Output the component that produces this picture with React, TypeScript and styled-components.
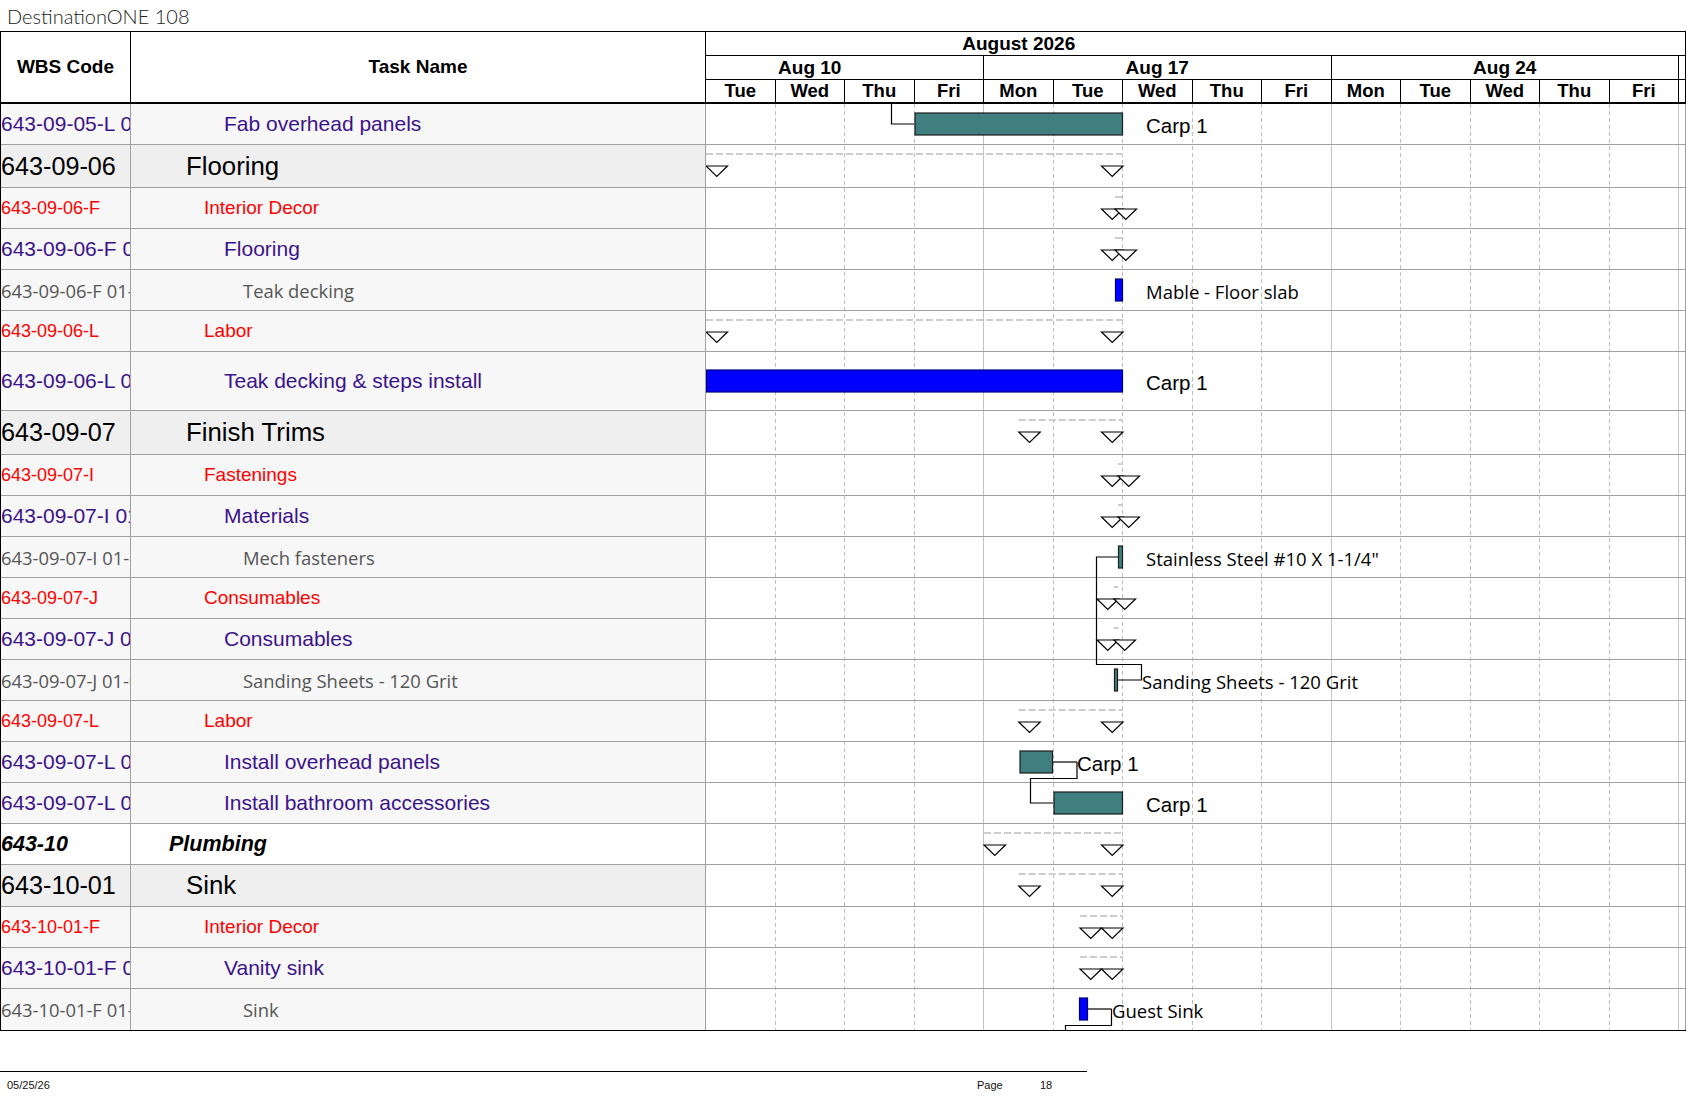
import React from 'react';
import styled, { createGlobalStyle, css } from 'styled-components';

const GlobalStyle = createGlobalStyle`
  html, body {
    margin: 0;
    padding: 0;
    background: #fff;
  }
  body {
    font-family: "Liberation Sans", Arial, sans-serif;
    color: #000;
  }
  * {
    box-sizing: border-box;
  }
`;

const DAY = 69.5;
const WBS_W = 130;
const TASK_W = 575;
const GANTT_W = 979;

type Kind = 'big' | 'red' | 'purple' | 'gray' | 'plumb';

interface TaskRow {
  wbs: string;
  name: string;
  kind: Kind;
  h: number;
}

const rows: TaskRow[] = [
  { wbs: '643-09-05-L 01', name: 'Fab overhead panels', kind: 'purple', h: 41 },
  { wbs: '643-09-06', name: 'Flooring', kind: 'big', h: 43 },
  { wbs: '643-09-06-F', name: 'Interior Decor', kind: 'red', h: 41 },
  { wbs: '643-09-06-F 01', name: 'Flooring', kind: 'purple', h: 41 },
  { wbs: '643-09-06-F 01-01', name: 'Teak decking', kind: 'gray', h: 41 },
  { wbs: '643-09-06-L', name: 'Labor', kind: 'red', h: 41 },
  { wbs: '643-09-06-L 01', name: 'Teak decking & steps install', kind: 'purple', h: 59 },
  { wbs: '643-09-07', name: 'Finish Trims', kind: 'big', h: 44 },
  { wbs: '643-09-07-I', name: 'Fastenings', kind: 'red', h: 41 },
  { wbs: '643-09-07-I 01', name: 'Materials', kind: 'purple', h: 41 },
  { wbs: '643-09-07-I 01-01', name: 'Mech fasteners', kind: 'gray', h: 41 },
  { wbs: '643-09-07-J', name: 'Consumables', kind: 'red', h: 41 },
  { wbs: '643-09-07-J 01', name: 'Consumables', kind: 'purple', h: 41 },
  { wbs: '643-09-07-J 01-01', name: 'Sanding Sheets - 120 Grit', kind: 'gray', h: 41 },
  { wbs: '643-09-07-L', name: 'Labor', kind: 'red', h: 41 },
  { wbs: '643-09-07-L 01', name: 'Install overhead panels', kind: 'purple', h: 41 },
  { wbs: '643-09-07-L 02', name: 'Install bathroom accessories', kind: 'purple', h: 41 },
  { wbs: '643-10', name: 'Plumbing', kind: 'plumb', h: 41 },
  { wbs: '643-10-01', name: 'Sink', kind: 'big', h: 42 },
  { wbs: '643-10-01-F', name: 'Interior Decor', kind: 'red', h: 41 },
  { wbs: '643-10-01-F 01', name: 'Vanity sink', kind: 'purple', h: 41 },
  { wbs: '643-10-01-F 01-01', name: 'Sink', kind: 'gray', h: 41 },
];

const tops: number[] = [];
rows.reduce((y, r) => {
  tops.push(y);
  return y + r.h;
}, 0);
const BODY_H = rows.reduce((s, r) => s + r.h, 0);
const center = (i: number) => tops[i] + (rows[i].h - 1) / 2;

// summary spans (start/end, px from the gantt's left edge)
const summaries = [
  { row: 1, x0: 0, x1: 417 },
  { row: 2, x0: 409, x1: 417 },
  { row: 3, x0: 409, x1: 417 },
  { row: 5, x0: 0, x1: 417 },
  { row: 7, x0: 312.75, x1: 417 },
  { row: 8, x0: 412, x1: 417 },
  { row: 9, x0: 412, x1: 417 },
  { row: 11, x0: 408, x1: 412.5 },
  { row: 12, x0: 408, x1: 412.5 },
  { row: 14, x0: 312.75, x1: 417 },
  { row: 17, x0: 278, x1: 417 },
  { row: 18, x0: 312.75, x1: 417 },
  { row: 19, x0: 374, x1: 417 },
  { row: 20, x0: 374, x1: 417 },
];

const TEAL = '#407f7f';
const BLUE = '#0000ff';

const bars = [
  { row: 0, x0: 208.5, x1: 417, fill: TEAL },
  { row: 4, x0: 409, x1: 417, fill: BLUE },
  { row: 6, x0: 0, x1: 417, fill: BLUE },
  { row: 10, x0: 412, x1: 417, fill: TEAL },
  { row: 13, x0: 408, x1: 412, fill: TEAL },
  { row: 15, x0: 313.5, x1: 347, fill: TEAL },
  { row: 16, x0: 347.5, x1: 417, fill: TEAL },
  { row: 21, x0: 373, x1: 382, fill: BLUE },
];

type Face = 'arial' | 'calibri';

const labels: { row: number; x: number; text: string; face: Face }[] = [
  { row: 0, x: 440, text: 'Carp 1', face: 'arial' },
  { row: 4, x: 440, text: 'Mable - Floor slab', face: 'calibri' },
  { row: 6, x: 440, text: 'Carp 1', face: 'arial' },
  { row: 10, x: 440, text: 'Stainless Steel #10 X 1-1/4"', face: 'calibri' },
  { row: 13, x: 436, text: 'Sanding Sheets - 120 Grit', face: 'calibri' },
  { row: 15, x: 371, text: 'Carp 1', face: 'arial' },
  { row: 16, x: 440, text: 'Carp 1', face: 'arial' },
  { row: 21, x: 406, text: 'Guest Sink', face: 'calibri' },
];

const links = [
  '185.5,0 185.5,20 208.5,20',
  '412,453 390.5,453 390.5,560.5 435.5,560.5 435.5,576 412,576',
  '347,658 371,658',
  '371,658 371,674.5 324.5,674.5 324.5,699 347.5,699',
  '382,905 405.5,905',
  '405.5,905 405.5,921.5 359.5,921.5 359.5,926',
];

const weeks = [
  { label: 'Aug 10', days: 4, shift: DAY },
  { label: 'Aug 17', days: 5, shift: 0 },
  { label: 'Aug 24', days: 5, shift: 0 },
];
const dayNames = ['Tue', 'Wed', 'Thu', 'Fri', 'Mon', 'Tue', 'Wed', 'Thu', 'Fri', 'Mon', 'Tue', 'Wed', 'Thu', 'Fri'];

const kindText: Record<Kind, ReturnType<typeof css>> = {
  big: css`
    font-size: 25.8px;
    color: #000;
  `,
  red: css`
    font-size: 19px;
    color: #ff0000;
  `,
  purple: css`
    font-size: 21px;
    color: #3b138a;
  `,
  gray: css`
    font-family: "Open Sans", "Liberation Sans", sans-serif;
    font-size: 18.4px;
    color: #555;
  `,
  plumb: css`
    font-size: 21.5px;
    font-weight: bold;
    font-style: italic;
    color: #000;
  `,
};

// the code column prints a touch smaller for some levels
const wbsSize: Partial<Record<Kind, number>> = { big: 25.2, red: 18 };

const indent: Record<Kind, number> = { plumb: 38, big: 55, red: 73, purple: 93, gray: 112 };
const rowBg: Record<Kind, string> = { plumb: '#ffffff', big: '#efefef', red: '#f7f7f7', purple: '#f7f7f7', gray: '#f7f7f7' };

const Page = styled.div`
  width: 1687px;
  min-height: 1097px;
  background: #fff;
`;

const TitleBar = styled.div`
  height: 31px;
  padding-left: 7px;
  display: flex;
  align-items: center;
  font-family: Lato, "Open Sans", sans-serif;
  font-weight: 300;
  font-size: 20px;
  color: #222;
`;

const Sheet = styled.div`
  width: 1686px;
  border: 1px solid #000;
  border-right: none;
`;

const HeadRow = styled.div`
  display: grid;
  grid-template-columns: ${WBS_W}px ${TASK_W}px ${GANTT_W + 1}px;
  height: 72px;
  border-bottom: 2px solid #000;
  background: #fff;
`;

const HeadCell = styled.div`
  display: flex;
  align-items: center;
  justify-content: center;
  border-right: 1px solid #000;
  font-weight: bold;
  font-size: 19px;
`;

const TimeScale = styled.div`
  display: flex;
  flex-direction: column;
  border-right: 1px solid #000;
  font-weight: bold;
`;

const MonthBand = styled.div`
  height: 24px;
  border-bottom: 1px solid #000;
  display: flex;
  align-items: center;
  justify-content: center;
  padding-right: ${GANTT_W - 2 * 312.75}px;
  font-size: 19px;
`;

const Band = styled.div<{ $h: number; $line?: boolean }>`
  display: flex;
  height: ${(p) => p.$h}px;
  border-bottom: ${(p) => (p.$line ? '1px solid #000' : 'none')};
`;

const ScaleCell = styled.div<{ $w: number; $shift?: number; $size: number }>`
  flex: 0 0 ${(p) => p.$w}px;
  display: flex;
  align-items: center;
  justify-content: center;
  padding-right: ${(p) => p.$shift || 0}px;
  border-right: 1px solid #000;
  font-size: ${(p) => p.$size}px;
`;

const Body = styled.div`
  display: flex;
`;

const Tree = styled.div`
  flex: none;
  width: ${WBS_W + TASK_W}px;
`;

const TreeRow = styled.div<{ $h: number; $kind: Kind }>`
  display: grid;
  grid-template-columns: ${WBS_W}px ${TASK_W}px;
  height: ${(p) => p.$h}px;
  border-bottom: 1px solid #a0a0a0;
  background: ${(p) => rowBg[p.$kind]};
  &:last-child {
    border-bottom: none;
  }
`;

const Cell = styled.div<{ $kind: Kind }>`
  display: flex;
  align-items: center;
  overflow: hidden;
  white-space: nowrap;
  border-right: 1px solid #a0a0a0;
  ${(p) => kindText[p.$kind]}
`;

const WbsCell = styled(Cell)<{ $size?: number }>`
  padding-left: 0;
  ${(p) => (p.$size ? `font-size: ${p.$size}px;` : '')}
`;

const NameCell = styled(Cell)<{ $indent: number }>`
  padding-left: ${(p) => p.$indent}px;
`;

const Chart = styled.svg`
  display: block;
  flex: none;
  background: #fff;
`;

const BarLabel = styled.text<{ $face: Face }>`
  font-family: ${(p) => (p.$face === 'arial' ? '"Liberation Sans", Arial, sans-serif' : '"Open Sans", sans-serif')};
  font-size: ${(p) => (p.$face === 'arial' ? 20.5 : 18.5)}px;
  fill: #000;
  dominant-baseline: central;
`;

const Footer = styled.div`
  width: 1087px;
  margin-top: 40px;
  border-top: 1px solid #000;
  display: flex;
  padding: 7px 0 0 7px;
  font-size: 11px;
  line-height: 13px;
  color: #111;
`;

const FooterDate = styled.div`
  flex: 1;
`;

const FooterSlot = styled.div<{ $w: number }>`
  width: ${(p) => p.$w}px;
`;

const Triangle: React.FC<{ x: number; y: number }> = ({ x, y }) => (
  <polygon
    points={`${x},${y} ${x + 21.5},${y} ${x + 10.75},${y + 10.5}`}
    fill="#fff"
    stroke="#000"
    strokeWidth={1.2}
  />
);

const GanttBody: React.FC = () => (
  <Chart width={GANTT_W + 1} height={BODY_H} viewBox={`0 0 ${GANTT_W + 1} ${BODY_H}`}>
    {Array.from({ length: 14 }, (_, i) => {
      const d = i + 1;
      const x = Math.round(d * DAY) - 0.5;
      const week = d === 4 || d === 9 || d === 14;
      return (
        <line
          key={d}
          x1={x}
          x2={x}
          y1={0}
          y2={BODY_H}
          stroke={week ? '#c4c4c4' : '#bdbdbd'}
          strokeWidth={1}
          strokeDasharray={week ? undefined : '4 3'}
        />
      );
    })}
    <line x1={GANTT_W + 0.5} x2={GANTT_W + 0.5} y1={0} y2={BODY_H} stroke="#a0a0a0" />
    {rows.slice(0, -1).map((r, i) => (
      <line key={i} x1={0} x2={GANTT_W} y1={tops[i] + r.h - 0.5} y2={tops[i] + r.h - 0.5} stroke="#a0a0a0" />
    ))}

    {summaries.map((s) => {
      const t = tops[s.row];
      return (
        <g key={s.row}>
          <line x1={s.x0} x2={s.x1} y1={t + 9} y2={t + 9} stroke="#cdcdcd" strokeWidth={2} strokeDasharray="7 3" />
          <Triangle x={s.x1 - 21.5} y={t + 21} />
          <Triangle x={s.x0} y={t + 21} />
        </g>
      );
    })}

    {links.map((pts, i) => (
      <polyline key={i} points={pts} fill="none" stroke="#000" strokeWidth={1.2} />
    ))}

    {bars.map((b) => {
      const y = center(b.row) - 11;
      return (
        <rect
          key={b.row}
          x={b.x0 + 0.5}
          y={y}
          width={b.x1 - b.x0 - 1}
          height={22}
          fill={b.fill}
          stroke={b.fill === BLUE ? '#00007a' : '#1c1c1c'}
          strokeWidth={1.2}
        />
      );
    })}

    {labels.map((l) => (
      <BarLabel key={l.row} x={l.x} y={center(l.row) + 1} $face={l.face}>
        {l.text}
      </BarLabel>
    ))}
  </Chart>
);

const App: React.FC = () => {
  return (
    <Page>
      <GlobalStyle />
      <TitleBar>DestinationONE 108</TitleBar>
      <Sheet>
        <HeadRow>
          <HeadCell>WBS Code</HeadCell>
          <HeadCell>Task Name</HeadCell>
          <TimeScale>
            <MonthBand>August 2026</MonthBand>
            <Band $h={24} $line>
              {weeks.map((w) => (
                <ScaleCell key={w.label} $w={w.days * DAY} $shift={w.shift} $size={19}>
                  {w.label}
                </ScaleCell>
              ))}
            </Band>
            <Band $h={22}>
              {dayNames.map((d, i) => (
                <ScaleCell key={i} $w={DAY} $size={18.5}>
                  {d}
                </ScaleCell>
              ))}
            </Band>
          </TimeScale>
        </HeadRow>
        <Body>
          <Tree>
            {rows.map((r, i) => (
              <TreeRow key={i} $h={r.h} $kind={r.kind}>
                <WbsCell $kind={r.kind} $size={wbsSize[r.kind]}>
                  {r.wbs}
                </WbsCell>
                <NameCell $kind={r.kind} $indent={indent[r.kind]}>
                  {r.name}
                </NameCell>
              </TreeRow>
            ))}
          </Tree>
          <GanttBody />
        </Body>
      </Sheet>
      <Footer>
        <FooterDate>05/25/26</FooterDate>
        <FooterSlot $w={63}>Page</FooterSlot>
        <FooterSlot $w={47}>18</FooterSlot>
      </Footer>
    </Page>
  );
};

export default App;
